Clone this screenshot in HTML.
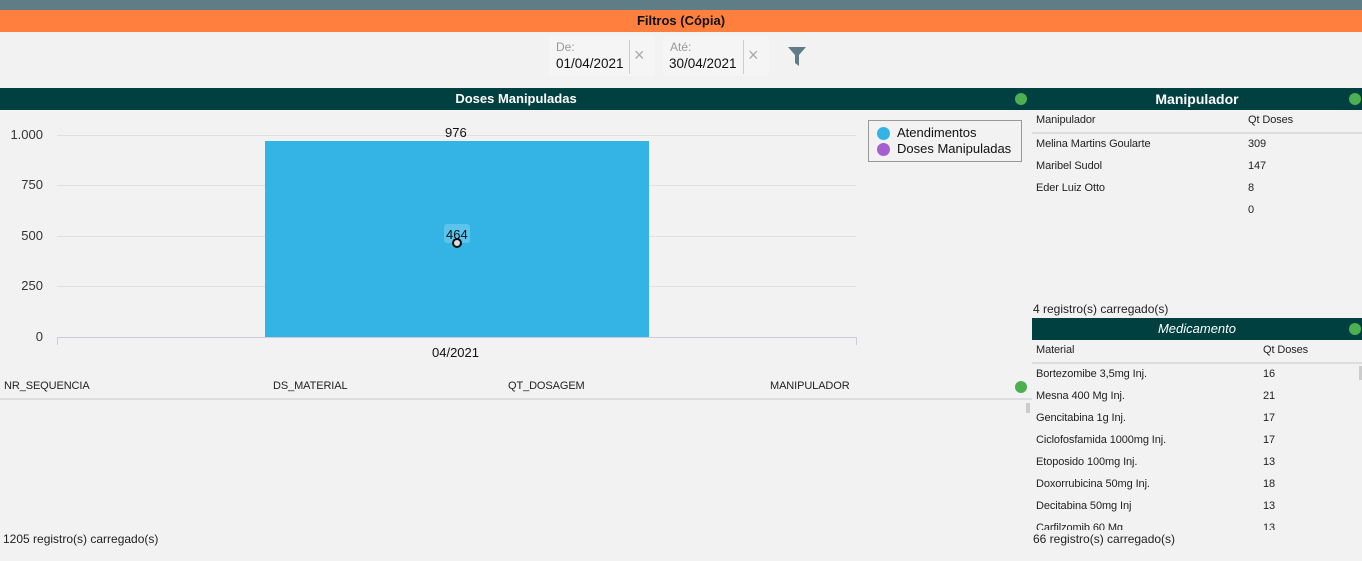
<!DOCTYPE html>
<html><head><meta charset="utf-8"><style>
*{margin:0;padding:0;box-sizing:border-box}
body{width:1362px;height:561px;background:#f2f2f2;font-family:"Liberation Sans",sans-serif;position:relative;overflow:hidden;color:#222}
.a{position:absolute;white-space:nowrap}
.hdr{position:absolute;background:#004040;color:#fff;font-weight:bold;font-size:13px;text-align:center;line-height:22px;height:22px}
.dot{position:absolute;width:12px;height:12px;border-radius:50%;background:#4caf50}
.s{font-size:11px;letter-spacing:-0.1px}
.grid{position:absolute;left:57px;width:799px;height:1px;background:#e0e0e0}
.yl{position:absolute;width:43px;text-align:right;font-size:13px;color:#333}
</style></head><body>
<div class="a" style="left:0;top:0;width:1362px;height:10px;background:#5f7d87"></div>
<div class="a" style="left:0;top:10px;width:1362px;height:22px;background:#ff7f3f;text-align:center;font-weight:bold;font-size:13px;line-height:22px;color:#111">Filtros (Cópia)</div>

<div class="a" style="left:549px;top:36px;width:106px;height:40px;background:#f5f5f5;border-radius:3px"></div>
<div class="a" style="left:556px;top:40px;font-size:12px;color:#999">De:</div>
<div class="a" style="left:556px;top:56px;font-size:13.5px;color:#111">01/04/2021</div>
<div class="a" style="left:629px;top:40px;width:1px;height:34px;background:#ccc"></div>
<div class="a" style="left:634px;top:45px;font-size:18px;color:#aaa">×</div>
<div class="a" style="left:663px;top:36px;width:106px;height:40px;background:#f5f5f5;border-radius:3px"></div>
<div class="a" style="left:670px;top:40px;font-size:12px;color:#999">Até:</div>
<div class="a" style="left:669px;top:56px;font-size:13.5px;color:#111">30/04/2021</div>
<div class="a" style="left:743px;top:40px;width:1px;height:34px;background:#ccc"></div>
<div class="a" style="left:748px;top:45px;font-size:18px;color:#aaa">×</div>
<svg class="a" style="left:788px;top:47px" width="18" height="19" viewBox="0 0 18 19"><path d="M0 0H18L11 8V19L7 16V8Z" fill="#5f7d87"/></svg>

<div class="hdr" style="left:0;top:88px;width:1032px">Doses Manipuladas</div>
<div class="dot" style="left:1015px;top:93px"></div>
<div class="hdr" style="left:1032px;top:88px;width:330px;font-size:14px">Manipulador</div>
<div class="dot" style="left:1349px;top:93px"></div>

<div class="grid" style="top:135px"></div>
<div class="grid" style="top:185px"></div>
<div class="grid" style="top:236px"></div>
<div class="grid" style="top:286px"></div>
<div class="a" style="left:57px;top:337px;width:799px;height:1px;background:#ccd"></div>
<div class="a" style="left:57px;top:337px;width:1px;height:8px;background:#ccd"></div>
<div class="a" style="left:856px;top:337px;width:1px;height:8px;background:#ccd"></div>
<div class="yl" style="left:0;top:127px">1.000</div>
<div class="yl" style="left:0;top:177px">750</div>
<div class="yl" style="left:0;top:228px">500</div>
<div class="yl" style="left:0;top:278px">250</div>
<div class="yl" style="left:0;top:329px">0</div>
<div class="a" style="left:265px;top:141px;width:384px;height:196px;background:#33b4e5"></div>
<div class="a" style="left:445px;top:125px;font-size:13px;color:#111">976</div>
<div class="a" style="left:444px;top:224px;width:26px;height:19px;background:#5ac4ec;border-radius:3px"></div>
<div class="a" style="left:446px;top:227px;font-size:13px;color:#111">464</div>
<div class="a" style="left:452px;top:238px;width:10px;height:10px;border-radius:50%;border:2px solid #111;background:#ddd"></div>
<div class="a" style="left:432px;top:345px;font-size:13px;color:#111">04/2021</div>

<div class="a" style="left:868px;top:120px;width:154px;height:42px;border:1px solid #999"></div>
<div class="a" style="left:877px;top:127px;width:13px;height:13px;border-radius:50%;background:#33b4e5"></div>
<div class="a" style="left:897px;top:125px;font-size:13px;color:#111">Atendimentos</div>
<div class="a" style="left:877px;top:143px;width:13px;height:13px;border-radius:50%;background:#a55fd0"></div>
<div class="a" style="left:897px;top:141px;font-size:13px;color:#111">Doses Manipuladas</div>

<div class="a s" style="left:4px;top:380px">NR_SEQUENCIA</div>
<div class="a s" style="left:273px;top:380px">DS_MATERIAL</div>
<div class="a s" style="left:508px;top:380px">QT_DOSAGEM</div>
<div class="a s" style="left:770px;top:380px">MANIPULADOR</div>
<div class="dot" style="left:1015px;top:381px"></div>
<div class="a" style="left:0;top:398px;width:1032px;height:2px;background:#ddd"></div>
<div class="a" style="left:1026px;top:403px;width:4px;height:10px;background:#ccc"></div>
<div class="a" style="left:3px;top:532px;font-size:12px;color:#222">1205 registro(s) carregado(s)</div>

<div class="a s" style="left:1036px;top:114px">Manipulador</div>
<div class="a s" style="left:1248px;top:114px">Qt Doses</div>
<div class="a" style="left:1032px;top:132px;width:330px;height:2px;background:#ddd"></div>
<div class="a s" style="left:1036px;top:138px">Melina Martins Goularte</div><div class="a s" style="left:1248px;top:138px">309</div>
<div class="a s" style="left:1036px;top:160px">Maribel Sudol</div><div class="a s" style="left:1248px;top:160px">147</div>
<div class="a s" style="left:1036px;top:182px">Eder Luiz Otto</div><div class="a s" style="left:1248px;top:182px">8</div>
<div class="a s" style="left:1248px;top:204px">0</div>
<div class="a" style="left:1033px;top:302px;font-size:12px">4 registro(s) carregado(s)</div>

<div class="hdr" style="left:1032px;top:318px;width:330px;font-style:italic;font-weight:normal">Medicamento</div>
<div class="dot" style="left:1349px;top:323px"></div>
<div class="a s" style="left:1036px;top:344px">Material</div>
<div class="a s" style="left:1263px;top:344px">Qt Doses</div>
<div class="a" style="left:1032px;top:362px;width:330px;height:2px;background:#ddd"></div>
<div class="a" style="left:1359px;top:366px;width:3px;height:14px;background:#ccc"></div>
<div style="position:absolute;left:1032px;top:364px;width:330px;height:166px;overflow:hidden">
<div class="a s" style="left:4px;top:4px">Bortezomibe 3,5mg Inj.</div><div class="a s" style="left:231px;top:4px">16</div>
<div class="a s" style="left:4px;top:26px">Mesna 400 Mg Inj.</div><div class="a s" style="left:231px;top:26px">21</div>
<div class="a s" style="left:4px;top:48px">Gencitabina 1g Inj.</div><div class="a s" style="left:231px;top:48px">17</div>
<div class="a s" style="left:4px;top:70px">Ciclofosfamida 1000mg  Inj.</div><div class="a s" style="left:231px;top:70px">17</div>
<div class="a s" style="left:4px;top:92px">Etoposido 100mg Inj.</div><div class="a s" style="left:231px;top:92px">13</div>
<div class="a s" style="left:4px;top:114px">Doxorrubicina 50mg Inj.</div><div class="a s" style="left:231px;top:114px">18</div>
<div class="a s" style="left:4px;top:136px">Decitabina 50mg Inj</div><div class="a s" style="left:231px;top:136px">13</div>
<div class="a s" style="left:4px;top:158px">Carfilzomib 60 Mg</div><div class="a s" style="left:231px;top:158px">13</div>
</div>
<div class="a" style="left:1033px;top:532px;font-size:12px">66 registro(s) carregado(s)</div>
</body></html>
